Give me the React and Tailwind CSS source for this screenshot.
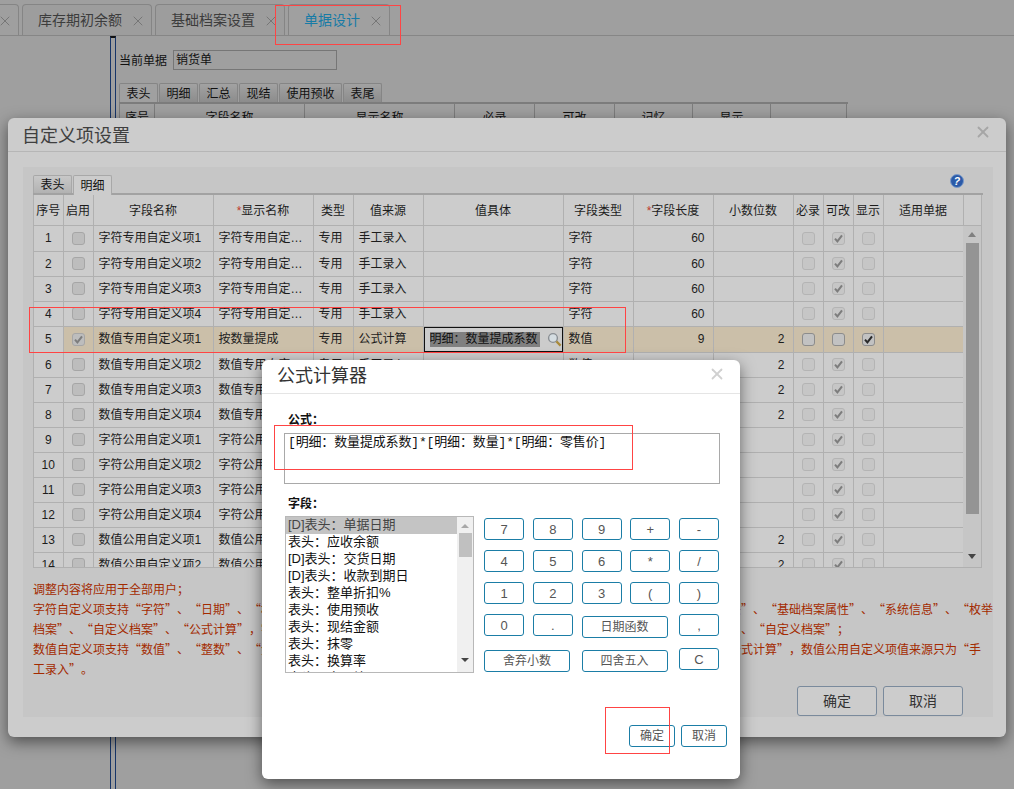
import React from "react";
import { X } from "lucide-react";

const sans = "[font-family:'Liberation_Sans','Noto_Sans_CJK_SC',sans-serif]";

const colWidths = [
  "w-[29px]", "w-[30px]", "w-[120px]", "w-[100px]", "w-[40px]", "w-[70px]", "w-[140px]", "w-[70px]",
  "w-[80px]", "w-[80px]", "w-[30px]", "w-[30px]", "w-[30px]", "w-[80px]",
];

const rows = [
  ["字符专用自定义项1", "字符专用自定义项1", "专用", "字符", "60", ""],
  ["字符专用自定义项2", "字符专用自定义项2", "专用", "字符", "60", ""],
  ["字符专用自定义项3", "字符专用自定义项3", "专用", "字符", "60", ""],
  ["字符专用自定义项4", "字符专用自定义项4", "专用", "字符", "60", ""],
  ["数值专用自定义项1", "按数量提成", "专用", "数值", "9", "2"],
  ["数值专用自定义项2", "数值专用自定义项2", "专用", "数值", "9", "2"],
  ["数值专用自定义项3", "数值专用自定义项3", "专用", "数值", "9", "2"],
  ["数值专用自定义项4", "数值专用自定义项4", "专用", "数值", "9", "2"],
  ["字符公用自定义项1", "字符公用自定义项1", "公用", "字符", "60", ""],
  ["字符公用自定义项2", "字符公用自定义项2", "公用", "字符", "60", ""],
  ["字符公用自定义项3", "字符公用自定义项3", "公用", "字符", "60", ""],
  ["字符公用自定义项4", "字符公用自定义项4", "公用", "字符", "60", ""],
  ["数值公用自定义项1", "数值公用自定义项1", "公用", "数值", "9", "2"],
  ["数值公用自定义项2", "数值公用自定义项2", "公用", "数值", "9", "2"],
];

const fieldList = [
  "[D]表头：单据日期", "表头：应收余额", "[D]表头：交货日期", "[D]表头：收款到期日", "表头：整单折扣%",
  "表头：使用预收", "表头：现结金额", "表头：抹零", "表头：换算率", "表头：合同编号",
];

function Check({ checked, tone }) {
  const box =
    tone === "strong"
      ? "border-[#8c8c8c] bg-[#c2c2c2]"
      : tone === "mid"
        ? "border-[#a6a6a6] bg-[#bdbdbd]"
        : "border-[#b4b4b4] bg-[#c6c6c6]";
  const ink = tone === "strong" ? "#2a2a2a" : "#7d7d7d";
  return (
    <span className={`mx-auto flex h-[13px] w-[13px] items-center justify-center rounded-[3px] border ${box}`}>
      {checked && (
        <svg width="9" height="9" viewBox="0 0 9 9">
          <path d="M1 4.6 L3.4 7.4 L8 1.4" fill="none" stroke={ink} strokeWidth="2" />
        </svg>
      )}
    </span>
  );
}

function Colgroup() {
  return (
    <colgroup>
      {colWidths.map((w, i) => (
        <col key={i} className={w} />
      ))}
    </colgroup>
  );
}

function Th({ children, star }) {
  return (
    <th className="border-r border-[#b0b0b0] p-0 pt-[1px] text-center text-[12px] font-normal whitespace-nowrap text-[#1c1c1c]">
      {star && <span className="text-[#c0392b]">*</span>}
      {children}
    </th>
  );
}

function Row({ i, r }) {
  const active = i === 4;
  const cell = `h-[25px] border-r border-b border-[#b0b0b0] p-0 text-[12px] text-[#1c1c1c] whitespace-nowrap ${active ? "bg-[#cbbfa9]" : ""}`;
  return (
    <tr>
      <td className="h-[25px] border-r border-b border-[#b0b0b0] p-0 text-center text-[12px] text-[#1c1c1c]">{i + 1}</td>
      <td className={cell}><Check tone="mid" checked={active} /></td>
      <td className={`${cell} pl-[5px]`}>{r[0]}</td>
      <td className={`${cell} truncate pl-[5px]`}>{r[1]}</td>
      <td className={`${cell} pl-[5px]`}>{r[2]}</td>
      <td className={`${cell} pl-[5px]`}>{active ? "公式计算" : "手工录入"}</td>
      <td className={cell}>
        {active && (
          <span className="flex h-[25px] items-center border border-[#111] bg-[#cccccc] pl-[5px]">
            <span className="w-[110px] overflow-hidden bg-[#808080] text-[12px] leading-[15px] whitespace-nowrap text-[#111]">明细：数量提成系数</span>
            <svg className="ml-[7px]" width="15" height="15" viewBox="0 0 15 15">
              <circle cx="6" cy="6" r="4.4" fill="#d5dde2" stroke="#8a8f94" strokeWidth="1.4" />
              <path d="M9.4 9.4 L13.6 13.6" stroke="#a98a3a" strokeWidth="2.2" />
            </svg>
          </span>
        )}
      </td>
      <td className={`${cell} pl-[5px]`}>{r[3]}</td>
      <td className={`${cell} pr-[8px] text-right`}>{r[4]}</td>
      <td className={`${cell} pr-[8px] text-right`}>{r[5]}</td>
      <td className={cell}><Check tone={active ? "strong" : "soft"} /></td>
      <td className={cell}><Check tone={active ? "strong" : "soft"} checked={!active} /></td>
      <td className={cell}><Check tone={active ? "strong" : "soft"} checked={active} /></td>
      <td className={cell}></td>
    </tr>
  );
}

function CalcButton({ children, className = "" }) {
  return (
    <button className={`h-[22px] rounded-[3px] border border-[#1b7da6] bg-white text-[12px] leading-none text-[#555] ${className}`}>
      {children}
    </button>
  );
}

function PageTab({ label, active, className = "" }) {
  return (
    <div className={`flex h-[31px] items-center rounded-t-[4px] border border-b-0 border-[#858585] pt-[1px] ${active ? "bg-[#a0a0a0]" : "bg-[#9d9d9d]"} ${className}`}>
      <span className={`text-[14px] whitespace-nowrap ${active ? "text-[#177ba6]" : "text-[#3c3c3c]"}`}>{label}</span>
      <X size={16} strokeWidth={1.3} className="ml-[8px] text-[#6f6f6f]" />
    </div>
  );
}

export default function App() {
  return (
    <div className={`relative h-[789px] w-[1014px] overflow-hidden bg-[#9f9f9f] ${sans}`}>
      {/* Page tab strip */}
      <div className="flex h-[36px] items-end gap-[3px] border-b border-[#868686] pl-0">
        <div className="-ml-[1px] flex h-[31px] w-[20px] items-center justify-start rounded-tr-[4px] border border-b-0 border-[#858585] pt-[1px]">
          <X size={16} strokeWidth={1.3} className="-ml-[3px] text-[#6f6f6f]" />
        </div>
        <PageTab label="库存期初余额" className="w-[130px] pl-[15px]" />
        <PageTab label="基础档案设置" className="w-[130px] pl-[15px]" />
        <PageTab label="单据设计" active className="w-[102px] pl-[15px]" />
      </div>

      {/* Page content */}
      <div className="flex h-[753px] pl-[110px]">
        <div className="h-full w-[6px] border-x border-t-2 border-[#173568] border-t-[#111]" />
        <div className="pl-[3px]">
          <div className="mt-[14px] flex h-[20px] items-center gap-[6px]">
            <span className="pt-[1px] text-[12px] text-[#111]">当前单据</span>
            <div className="flex h-[20px] w-[164px] items-center border border-[#767676] pl-[2px] text-[12px] text-[#111]">销货单</div>
          </div>
          <div className="mt-[13px] flex h-[19px] gap-[1px]">
            {[["表头", "w-[39px]"], ["明细", "w-[39px]"], ["汇总", "w-[39px]"], ["现结", "w-[39px]"], ["使用预收", "w-[63px]"], ["表尾", "w-[39px]"]].map(([t, w], i) => (
              <div key={t} className={`flex items-center justify-center rounded-t-[2px] border border-b-0 border-[#858585] pt-[2px] text-[12px] text-[#111] ${w} ${i === 0 ? "bg-[#a0a0a0]" : "bg-gradient-to-b from-[#a2a2a2] to-[#8c8c8c]"}`}>{t}</div>
            ))}
          </div>
          <div className="flex h-[30px] w-[729px] border-t-2 border-l border-[#7c7c7c]">
            {[["序号", "w-[35px]"], ["字段名称", "w-[150px]"], ["显示名称", "w-[150px]"], ["必录", "w-[80px]"], ["可改", "w-[80px]"], ["记忆", "w-[78px]"], ["显示", "w-[78px]"], ["", "w-[76px]"]].map(([t, w], i) => (
              <div key={i} className={`flex items-center justify-center border-r border-[#7c7c7c] text-[12px] text-[#111] ${w}`}>{t}</div>
            ))}
          </div>
        </div>
      </div>

      {/* Custom item settings dialog */}
      <div className="absolute top-[118px] left-[8px] flex h-[619px] w-[998px] flex-col rounded-[6px] bg-[#cccccc] shadow-[0_5px_15px_rgba(0,0,0,0.5)]">
        <div className="flex h-[34px] shrink-0 items-center justify-between border-b border-[#b6b6b6] pr-[14px] pl-[14px]">
          <span className="mt-[4px] text-[18px] text-[#3f3f3f]">自定义项设置</span>
          <X size={18} strokeWidth={2.4} className="mb-[6px] text-[#a6a6a6]" />
        </div>
        <div className="mx-[15px] mt-[15px] flex h-[550px] w-[970px] flex-col bg-[#c6c6c6] px-[10px] pt-[8px]">
          <div className="flex h-[20px] items-start gap-[1px] border-b-2 border-[#a2a2a2]">
            <div className="flex h-[18px] w-[39px] items-center justify-center rounded-t-[2px] border border-b-0 border-[#a8a8a8] bg-gradient-to-b from-[#c8c8c8] to-[#b2b2b2] text-[12px] text-[#111]">表头</div>
            <div className="flex h-[20px] w-[39px] items-center justify-center rounded-t-[2px] border border-b-0 border-[#a8a8a8] bg-[#cccccc] text-[12px] text-[#111]">明细</div>
            <svg className="mt-[-1px] ml-[837px]" width="14" height="14" viewBox="0 0 14 14">
              <circle cx="7" cy="7" r="6.5" fill="#2a5aa8" stroke="#7b9ac8" />
              <text x="7" y="10.8" textAnchor="middle" fontSize="10.5" fontWeight="700" fontStyle="italic" fill="#fff" fontFamily="Liberation Sans">?</text>
            </svg>
          </div>
          <div className="h-[373px] w-[949px] shrink-0 overflow-hidden border-r border-b border-l border-[#b0b0b0] bg-[#cccccc]">
            <div className="flex h-[31px] border-b border-[#b0b0b0]">
              <table className="h-[30px] w-[929px] table-fixed border-collapse">
                <Colgroup />
                <thead>
                  <tr>
                    <Th>序号</Th><Th>启用</Th><Th>字段名称</Th><Th star>显示名称</Th><Th>类型</Th><Th>值来源</Th><Th>值具体</Th><Th>字段类型</Th>
                    <Th star>字段长度</Th><Th>小数位数</Th><Th>必录</Th><Th>可改</Th><Th>显示</Th><Th>适用单据</Th>
                  </tr>
                </thead>
              </table>
            </div>
            <div className="flex h-[341px]">
              <div className="w-[929px] overflow-hidden">
                <table className="w-[929px] table-fixed border-collapse">
                  <Colgroup />
                  <tbody>
                    {rows.map((r, i) => (
                      <Row key={i} i={i} r={r} />
                    ))}
                  </tbody>
                </table>
              </div>
              <div className="flex w-[18px] flex-col items-center bg-[#c6c6c6] pt-[6px]">
                <span className="h-0 w-0 border-x-[4px] border-b-[5px] border-x-transparent border-b-[#808080]" />
                <div className="mt-[6px] h-[271px] w-[13px] bg-[#949494]" />
                <span className="mt-[40px] h-0 w-0 border-x-[4px] border-t-[5px] border-x-transparent border-t-[#444]" />
              </div>
            </div>
          </div>
          <div className="mt-[11px] text-[12px] leading-[20px] whitespace-nowrap text-[#a32a00] [font-family:'Noto_Sans_CJK_SC',sans-serif] [text-spacing-trim:space-all]">
            <div>调整内容将应用于全部用户；</div>
            <div>字符自定义项支持“字符”、“日期”、“枚举”、“整数”，字符专用自定义项值来源支持“手工录入”、“单据字段”、“单据头”、“基础档案属性”、“系统信息”、“枚举</div>
            <div>档案”、“自定义档案”、“公式计算”，字符公用自定义项值来源支持“手工录入”、“基础档案”、“系统信息”、“枚举档案”、“自定义档案”；</div>
            <div>数值自定义项支持“数值”、“整数”、“金额”、“数量”，数值专用自定义项值来源支持“手工录入”、“单据”、“档”、“公式计算”，数值公用自定义项值来源只为“手</div>
            <div>工录入”。</div>
          </div>
          <div className="mt-[7px] flex justify-end gap-[6px] pr-[20px]">
            <button className="h-[30px] w-[80px] rounded-[3px] border border-[#7a8a9c] bg-[#cccccc] text-[14px] text-[#333]">确定</button>
            <button className="h-[30px] w-[80px] rounded-[3px] border border-[#7a8a9c] bg-[#cccccc] text-[14px] text-[#333]">取消</button>
          </div>
        </div>
      </div>

      {/* Formula calculator dialog */}
      <div className="absolute top-[360px] left-[262px] h-[419px] w-[478px] rounded-[6px] bg-white shadow-[0_5px_15px_rgba(0,0,0,0.5)]">
        <div className="flex h-[34px] items-center justify-between border-b border-[#e5e5e5] pr-[14px] pl-[15px]">
          <span className="text-[18px] text-[#333]">公式计算器</span>
          <X size={18} strokeWidth={2.4} className="mb-[6px] text-[#d0d0d0]" />
        </div>
        <div className="px-[22px]">
          <div className="mt-[18px] pl-[4px] text-[12px] leading-[17px] font-bold text-[#111]">公式：</div>
          <div className="mt-[4px] h-[51px] w-[436px] border border-[#a9a9a9] pl-[3px] text-[13px] leading-[18px] tracking-[-0.15px] text-[#111] [font-family:'Liberation_Mono','Noto_Sans_CJK_SC',monospace]">[明细：数量提成系数]*[明细：数量]*[明细：零售价]</div>
          <div className="mt-[12px] pl-[4px] text-[12px] leading-[17px] font-bold text-[#111]">字段：</div>
          <div className="mt-[3px] flex gap-[10px] pl-[1px]">
            <div className="flex h-[157px] w-[189px] shrink-0 overflow-hidden border border-[#b8b8b8]">
              <div className="w-[171px] shrink-0 text-[13px] leading-[15px] whitespace-nowrap text-[#111]">
                {fieldList.map((f, i) => (
                  <div key={f} className={`h-[17px] pl-[2px] ${i === 0 ? "bg-[#c4c4c4] text-[#444]" : ""}`}>{f}</div>
                ))}
              </div>
              <div className="flex w-[16px] flex-col items-center bg-[#f0f0f0] pt-[7px]">
                <span className="h-0 w-0 border-x-[4px] border-b-[4px] border-x-transparent border-b-[#a8a8a8]" />
                <div className="mt-[5px] h-[24px] w-[13px] bg-[#c0c0c0]" />
                <span className="mt-[101px] h-0 w-0 border-x-[4px] border-t-[4px] border-x-transparent border-t-[#444]" />
              </div>
            </div>
            <div className="grid shrink-0 grid-cols-[40px_40px_40px_40px_40px] content-start gap-x-[8.75px] gap-y-[10px] pt-[2px]">
              {["7", "8", "9", "+", "-", "4", "5", "6", "*", "/", "1", "2", "3", "(", ")", "0", "."].map((b) => (
                <CalcButton key={b} className="text-[13px]">{b}</CalcButton>
              ))}
              <div className="col-span-2"><CalcButton className="w-[86px]">日期函数</CalcButton></div>
              <CalcButton className="text-[13px]">,</CalcButton>
              <div className="col-span-2"><CalcButton className="w-[86px]">舍弃小数</CalcButton></div>
              <div className="col-span-2"><CalcButton className="w-[86px]">四舍五入</CalcButton></div>
              <CalcButton className="text-[13px]">C</CalcButton>
            </div>
          </div>
          <div className="mt-[52px] flex justify-end gap-[6px]">
            <CalcButton className="w-[46px] text-[#333]">确定</CalcButton>
            <CalcButton className="-mr-[9px] w-[46px] text-[#333]">取消</CalcButton>
          </div>
        </div>
      </div>

      {/* Annotation boxes */}
      <div className="absolute top-[5px] left-[275px] h-[40px] w-[126px] border border-[#f44]" />
      <div className="absolute top-[307px] left-[29px] h-[46px] w-[597px] border border-[#f44]" />
      <div className="absolute top-[425px] left-[274px] h-[45px] w-[359px] border border-[#f44]" />
      <div className="absolute top-[707px] left-[605px] h-[47px] w-[65px] border border-[#f44]" />
    </div>
  );
}
